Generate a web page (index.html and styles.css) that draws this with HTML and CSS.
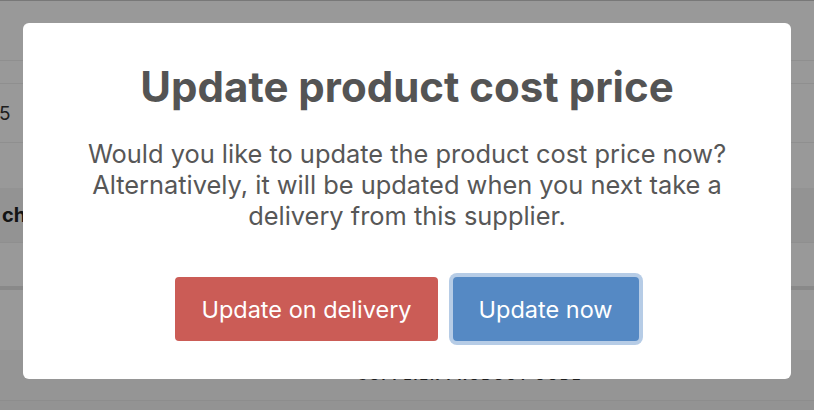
FILE: index.html
```html
<!DOCTYPE html>
<html lang="en">
<head>
<meta charset="utf-8">
<title>Update product cost price</title>
<link rel="stylesheet" href="styles.css">
</head>
<body>
<div class="page">
  <div class="row row-a"></div>
  <div class="row row-b"></div>
  <div class="row row-c"><span class="cell-num">5</span></div>
  <div class="row row-d"></div>
  <div class="row row-head"><span class="cell-head">ch</span></div>
  <div class="row row-e"></div>
  <div class="row row-f"></div>
  <div class="panel">
    <div class="panel-head">SUPPLIER PRODUCT CODE</div>
  </div>
  <div class="row row-g"></div>
</div>
<div class="overlay"></div>
<div class="modal" role="dialog">
  <h2 class="modal-title">Update product cost price</h2>
  <p class="modal-text">Would you like to update the product cost price now?<br>Alternatively, it will be updated when you next take a<br>delivery from this supplier.</p>
  <div class="modal-actions">
    <button class="btn btn-cancel">Update on delivery</button>
    <button class="btn btn-confirm">Update now</button>
  </div>
</div>
</body>
</html>
```
FILE: styles.css
```css
html, body {
  margin: 0;
  padding: 0;
  width: 814px;
  height: 410px;
  overflow: hidden;
  background: #ffffff;
  font-family: "Inter", "Liberation Sans", sans-serif;
}

.page {
  display: flex;
  flex-direction: column;
  border-top: 1px solid #c8c8c8;
}

.row {
  display: flex;
  align-items: center;
  border-bottom: 1px solid #eeeeee;
  color: #333333;
}

.row-a { height: 59px; }
.row-b { height: 22px; }
.row-c { height: 58px; font-size: 19px; }
.row-d { height: 45px; border-bottom: none; }
.row-head {
  height: 54px;
  background: #f5f5f5;
  font-weight: 700;
  font-size: 20px;
  color: #222222;
}
.row-e { height: 43px; border-bottom: 4px solid #e5e5e5; }
.row-f { height: 60px; border-bottom: none; }

.cell-num { margin-left: -1px; }
.cell-head { margin-left: 2px; }

.panel {
  height: 50px;
  background: #f9f9f9;
  border-bottom: 1px solid #ececec;
  display: flex;
  align-items: flex-end;
  padding-left: 358px;
}

.panel-head {
  font-size: 14px;
  font-weight: 700;
  letter-spacing: 2px;
  color: #333333;
  line-height: 16px;
  margin-bottom: 17px;
}

.row-g { height: 12px; background: #f6f6f6; border-bottom: none; }

.overlay {
  position: fixed;
  inset: 0;
  background: rgba(0, 0, 0, 0.4);
}

.modal {
  position: fixed;
  left: 23px;
  top: 23px;
  width: 768px;
  height: 356px;
  box-sizing: border-box;
  padding-top: 40px;
  background: #ffffff;
  border-radius: 6px;
  display: flex;
  flex-direction: column;
  align-items: center;
  text-align: center;
}

.modal-title {
  margin: 0;
  font-size: 42px;
  line-height: 48px;
  font-weight: 700;
  color: #545454;
}

.modal-text {
  margin: 27px 0 0;
  font-size: 25.4px;
  line-height: 31px;
  font-weight: 400;
  color: #575757;
}

.modal-actions {
  margin-top: 46px;
  display: flex;
  gap: 15px;
}

.btn {
  height: 64px;
  padding: 0 26px;
  border: none;
  border-radius: 4px;
  font-family: inherit;
  font-size: 23.5px;
  color: #ffffff;
}

.btn-cancel { background: #cb5c56; }

.btn-confirm {
  background: #5589c4;
  box-shadow: 0 0 0 4px #b6cce6;
}
```
